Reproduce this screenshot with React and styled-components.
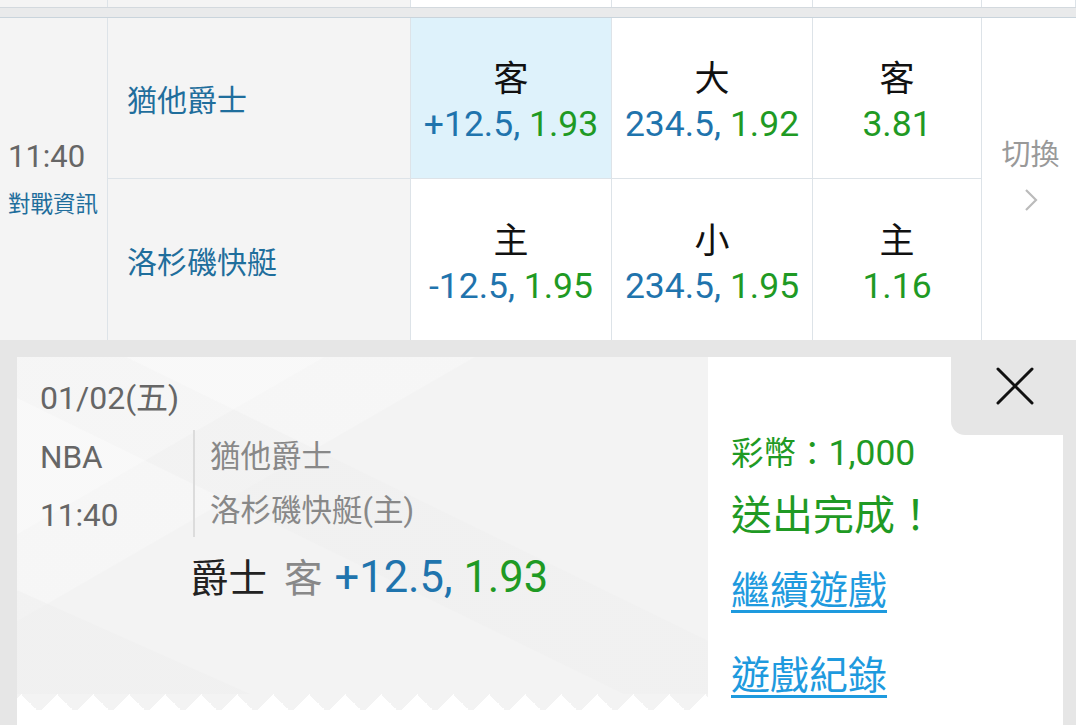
import styled, { createGlobalStyle } from "styled-components";

const GlobalStyle = createGlobalStyle`
  html, body {
    margin: 0;
    padding: 0;
    background: #fff;
  }
  body {
    font-family: Roboto, "Noto Sans CJK TC", "Noto Sans", sans-serif;
    width: 1076px;
    overflow: hidden;
  }
`;

const COLS = "108px 303px 201px 201px 169px 1fr";
const LINE = "#dde3e8";
const BLUE = "#1f6e9c";
const ODDS_BLUE = "#1f74ad";
const GREEN = "#1f9a24";

const Page = styled.div`
  width: 1076px;
  height: 725px;
  display: flex;
  flex-direction: column;
`;

const StubRow = styled.div`
  display: grid;
  grid-template-columns: ${COLS};
  height: 7px;
`;

const StubCell = styled.div`
  background: ${(p) => (p.$gray ? "#f4f4f4" : "#fff")};
  border-right: 1px solid ${LINE};
`;

const Separator = styled.div`
  height: 9px;
  background: #e9eaeb;
  border-top: 1px solid #d3d9de;
  border-bottom: 1px solid #c9d4dc;
`;

const MatchGrid = styled.div`
  display: grid;
  grid-template-columns: ${COLS};
  grid-template-rows: 161px 161px;
`;

const TimeCell = styled.div`
  grid-row: span 2;
  background: #f4f4f4;
  border-right: 1px solid ${LINE};
  display: flex;
  flex-direction: column;
  justify-content: center;
  gap: 14px;
  padding-left: 8px;
`;

const Time = styled.div`
  font-size: 31px;
  line-height: 36px;
  color: #666;
`;

const InfoLink = styled.div`
  font-size: 22.5px;
  line-height: 30px;
  color: ${BLUE};
  white-space: nowrap;
`;

const TeamCell = styled.div`
  background: #f4f4f4;
  border-right: 1px solid ${LINE};
  border-bottom: ${(p) => (p.$first ? `1px solid ${LINE}` : "none")};
  display: flex;
  align-items: center;
  padding-left: 19px;
  font-size: 30px;
  color: ${BLUE};
`;

const OddsCell = styled.div`
  background: ${(p) => (p.$active ? "#def2fb" : "#fff")};
  border-right: 1px solid ${LINE};
  border-bottom: ${(p) => (p.$first ? `1px solid ${LINE}` : "none")};
  display: flex;
  flex-direction: column;
  align-items: center;
  justify-content: center;
  gap: 2px;
  padding-top: 8px;
  white-space: nowrap;
`;

const OddsLabel = styled.div`
  font-size: 35px;
  line-height: 42px;
  color: #111;
`;

const OddsValue = styled.div`
  font-size: 35.5px;
  line-height: 42px;
  color: ${GREEN};
`;

const Line = styled.span`
  color: ${(p) => p.$color || "inherit"};
  font-size: ${(p) => p.$size || "inherit"};
  margin-left: ${(p) => p.$gap || "0px"};
`;

const SwitchCell = styled.div`
  grid-row: span 2;
  background: #fff;
  display: flex;
  flex-direction: column;
  align-items: center;
  justify-content: center;
  gap: 14px;
  padding: 0 0 14px 3px;
  color: #999;
  font-size: 29px;
`;

const Panel = styled.div`
  position: relative;
  flex: 1;
  background: #e6e6e6;
  padding: 17px 13px 0 17px;
  display: flex;
`;

const Card = styled.div`
  flex: 1;
  display: flex;
  background: #fff;
`;

const Ticket = styled.div`
  width: 691px;
  display: flex;
  flex-direction: column;
  background: #fff;
`;

const TicketBody = styled.div`
  flex: 1;
  padding: 21px 0 0 23px;
  background-color: #f3f3f3;
  background-image:
    linear-gradient(150deg, rgba(255, 255, 255, 0.28) 0 24%, transparent 24.2%),
    linear-gradient(206deg, transparent 0 42%, rgba(238, 238, 238, 0.45) 42.2% 56%, transparent 56.2%),
    linear-gradient(24deg, rgba(238, 238, 238, 0.5) 0 16%, transparent 16.2%),
    linear-gradient(330deg, transparent 0 64%, rgba(250, 250, 250, 0.45) 64.2%);
`;

const Zigzag = styled.div`
  height: 16px;
  background: conic-gradient(from 135deg at 50% 0, #fff 90deg, #f3f3f3 0) 22px 0 / 36px 16px repeat-x;
`;

const Filler = styled.div`
  height: 15px;
  background: #fff;
`;

const DateText = styled.div`
  font-size: 32px;
  line-height: 40px;
  color: #666;
`;

const InfoRow = styled.div`
  display: flex;
  margin-top: 12px;
`;

const LeagueCol = styled.div`
  width: 153px;
  font-size: 31.5px;
  line-height: 58px;
  color: #666;
  margin-top: -1px;
`;

const TeamsCol = styled.div`
  border-left: 2px solid #dcdcdc;
  padding-left: 15px;
  font-size: 30.5px;
  line-height: 54px;
  color: #888;
  height: 107px;
  white-space: nowrap;
`;

const BetLine = styled.div`
  margin: 8px 0 0 150px;
  font-size: 38.5px;
  line-height: 50px;
  white-space: nowrap;
`;

const Result = styled.div`
  width: 355px;
  background: #fff;
  padding: 76px 0 0 23px;
  box-sizing: border-box;
`;

const Coins = styled.div`
  font-size: 32.5px;
  line-height: 40px;
  color: ${GREEN};
  white-space: nowrap;
`;

const Done = styled.div`
  margin-top: 14px;
  font-size: 41px;
  line-height: 56px;
  color: ${GREEN};
  white-space: nowrap;
`;

const ActionLink = styled.a`
  display: block;
  margin-top: ${(p) => p.$mt || "0px"};
  font-size: 39px;
  line-height: 50px;
  color: #1e9ade;
  text-decoration: underline;
  text-decoration-thickness: 3px;
  text-underline-offset: 6px;
`;

const CloseTab = styled.div`
  position: absolute;
  top: 0;
  right: 0;
  width: 125px;
  height: 95px;
  background: #e6e6e6;
  border-bottom-left-radius: 14px;
  display: flex;
  align-items: center;
  justify-content: center;
  padding: 0 0 4px 2px;
  box-sizing: border-box;
`;

const CloseIcon = () => (
  <svg width="40" height="40" viewBox="0 0 40 40">
    <path d="M3 3 37 37M37 3 3 37" stroke="#111" strokeWidth="3" strokeLinecap="round" fill="none" />
  </svg>
);

const Chevron = () => (
  <svg width="16" height="26" viewBox="0 0 16 26">
    <path d="M3 3 13 13 3 23" stroke="#bbb" strokeWidth="2.2" fill="none" />
  </svg>
);

const rows = [
  {
    team: "猶他爵士",
    odds: [
      { label: "客", a: "+12.5, ", b: "1.93", active: true },
      { label: "大", a: "234.5, ", b: "1.92" },
      { label: "客", b: "3.81" },
    ],
  },
  {
    team: "洛杉磯快艇",
    odds: [
      { label: "主", a: "-12.5, ", b: "1.95" },
      { label: "小", a: "234.5, ", b: "1.95" },
      { label: "主", b: "1.16" },
    ],
  },
];

const OddsRow = ({ row, first }) => (
  <>
    <TeamCell $first={first}>{row.team}</TeamCell>
    {row.odds.map((o, i) => (
      <OddsCell key={i} $first={first} $active={o.active}>
        <OddsLabel>{o.label}</OddsLabel>
        <OddsValue>
          {o.a && <Line $color={ODDS_BLUE}>{o.a}</Line>}
          {o.b}
        </OddsValue>
      </OddsCell>
    ))}
  </>
);

const App = () => {
  return (
    <Page>
      <GlobalStyle />
      <StubRow>
        <StubCell $gray />
        <StubCell $gray />
        <StubCell />
        <StubCell />
        <StubCell />
        <StubCell />
      </StubRow>
      <Separator />
      <MatchGrid>
        <TimeCell>
          <Time>11:40</Time>
          <InfoLink>對戰資訊</InfoLink>
        </TimeCell>
        <OddsRow row={rows[0]} first />
        <SwitchCell>
          切換
          <Chevron />
        </SwitchCell>
        <OddsRow row={rows[1]} />
      </MatchGrid>
      <Panel>
        <Card>
          <Ticket>
            <TicketBody>
              <DateText>01/02(五)</DateText>
              <InfoRow>
                <LeagueCol>
                  <div>NBA</div>
                  <div>11:40</div>
                </LeagueCol>
                <TeamsCol>
                  <div>猶他爵士</div>
                  <div>洛杉磯快艇(主)</div>
                </TeamsCol>
              </InfoRow>
              <BetLine>
                <Line $color="#222">爵士</Line>
                <Line $color="#888" $gap="17px">客</Line>
                <Line $color={ODDS_BLUE} $size="43.5px" $gap="12px">+12.5, </Line>
                <Line $color={GREEN} $size="43.5px">1.93</Line>
              </BetLine>
            </TicketBody>
            <Zigzag />
            <Filler />
          </Ticket>
          <Result>
            <Coins>
              彩幣：<Line $size="35.5px">1,000</Line>
            </Coins>
            <Done>送出完成！</Done>
            <ActionLink $mt="22px">繼續遊戲</ActionLink>
            <ActionLink $mt="35px">遊戲紀錄</ActionLink>
          </Result>
        </Card>
        <CloseTab>
          <CloseIcon />
        </CloseTab>
      </Panel>
    </Page>
  );
};

export default App;
